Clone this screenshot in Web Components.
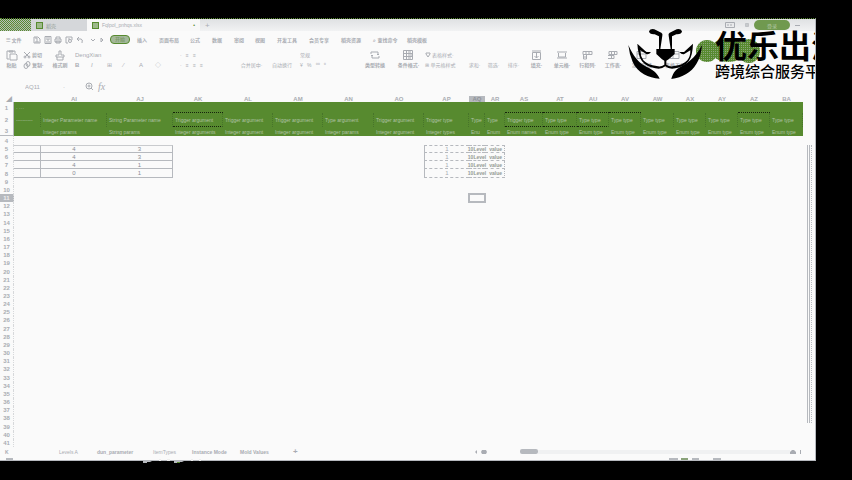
<!DOCTYPE html>
<html lang="zh-CN">
<head>
<meta charset="utf-8">
<title>Spreadsheet</title>
<style>
html, body { margin: 0; height: 100%; background: #000; }
body { font-family: "Liberation Sans", "Noto Sans CJK SC", sans-serif; --ink: #a9acb2; --green: #578a2f; --paper: #fafafa; color: var(--ink); }
</style>
</head>
<body>
<app-window></app-window>
<script>
const base = `:host,*{box-sizing:border-box}
button,input,select{all:unset;box-sizing:border-box;font:inherit;color:inherit;white-space:nowrap;cursor:default}
svg{display:block;fill:none;stroke:currentColor;stroke-width:1}`;
// Proportional column tracks from a list of start positions.
const tracks = (starts, total) => starts.map((s, i) =>
  `minmax(0,${(i + 1 < starts.length ? starts[i + 1] : total) - s}fr)`).join(' ');
class Base extends HTMLElement {
  paint(css, html) {
    this.attachShadow({ mode: 'open' }).innerHTML = `<style>${base}${css}</style>${html}`;
  }
}
const svg = (w, h, body) => `<svg width="${w}" height="${h}" viewBox="0 0 ${w} ${h}" aria-hidden="true">${body}</svg>`;
const icons = {
  save: svg(8, 8, '<path d="M1 1h4l2 2v4h-6zM3 1v2h2M3 7v-2h2v2"/>'),
  pdf: svg(8, 8, '<path d="M1 .5h6v7h-6zM3 1v3h2v-3M2 6h4"/>'),
  print: svg(8, 8, '<path d="M2 3v-2h4v2M1 3h6v3h-6zM2 5h4v2h-4z"/>'),
  find: svg(8, 8, '<path d="M1 1h6v3M1 1v6h2M3 3h2"/><circle cx="5" cy="5" r="1.5"/>'),
  undo: svg(8, 8, '<path d="M3 1L1 3l2 2M1 3h4q2 0 1 4"/>'),
  drop: svg(6, 8, '<path d="M1 3l2 2 2-2"/>'),
  play: svg(6, 8, '<path d="M2 2l2 2-2 2z"/>'),
  paste: svg(12, 11, '<path d="M3 9h-2v-8h8v2M4 4h6l1 1v5h-7z"/><path d="M3 1h4v1h-4z"/>'),
  cut: svg(8, 8, '<path d="M1 1l5 5M7 1l-5 5"/><circle cx="2" cy="6" r="1"/><circle cx="6" cy="6" r="1"/>'),
  copy: svg(8, 8, '<ellipse cx="3" cy="5" rx="2" ry="2.5"/><ellipse cx="5" cy="3" rx="2" ry="2.5"/>'),
  brush: svg(10, 11, '<path d="M4 1h2v4h3v2h-8v-2h3zM2 7v3h6v-3"/>'),
  cycle: svg(10, 10, '<path d="M1 4v-2h7v3M7 4l1 1 1-1M9 6v2h-7v-3M1 6l1-1 1 1"/>'),
  cond: svg(10, 10, '<path d="M.5 .5h9v9h-9zM0 3.500h10M0 6.500h10M3.500 0v10"/><path d="M5 2h3M5 5h4M5 8h3"/>'),
  tableicon: svg(6, 6, '<path d="M1 1h4v1l-2 3-2-3z"/>'),
  fill: svg(11, 10, '<path d="M1 1h9M1.500 2.500h8v7h-8zM5.500 3v5M3.500 6l2 2 2-2"/>'),
  cells: svg(10, 8, '<path d="M0 1h10M0 7h10M1.500 2v4h7v-4"/>'),
  rows: svg(11, 10, '<path d="M1 1.500h9v3h-9zM1.500 4v5h3v-5M4 1v3M7 1v3M1 7h3"/>'),
  sheet: svg(11, 10, '<path d="M2 1.500h8v3h-8zM1 5.500h6v3h-6M4.500 1v8M7.500 1v4"/>'),
  freeze: svg(11, 10, '<path d="M1 1.500h9v7h-9zM1 4h9M4 1v7"/>'),
  zoom: svg(9, 9, '<circle cx="4" cy="4" r="3"/><path d="M6 6l2 2M2.500 4h3M4 2.500v3"/>')
};

customElements.define('title-bar', class extends Base {
  connectedCallback() {
    this.paint(`:host{display:grid;grid-template-columns:${tracks([0,31,87,200,720,740,754,790,806],815)};align-items:center;height:12px;font-size:5px;
      background:linear-gradient(#dfe1e3,#f1f2f3)}
      button{display:flex;align-items:center;gap:3px;height:12px;padding:0 5px}
      .home{background:repeating-conic-gradient(#578a2f 0 25%,#b9c0b9 0 50%) 0 0/2px 2px;justify-content:center;color:#82a072}
      .doc{background:#d5d7da;color:#8f9a91}
      .active{background:#f8f8f8;justify-content:space-between}
      .mark{width:7px;height:7px;border:1px solid #578a2f;background:#9eb98b;display:inline-block}
      span{display:flex;align-items:center;gap:3px}
      b{color:#578a2f}
      .plus{font-size:8px}
      .user{height:10px;border-radius:5px;background:#70994f;justify-content:center;color:#b6c9a9}
      `, `<button class="home">首页</button>
      <button class="doc"><i class="mark"></i>稻壳</button>
      <button class="active"><span><i class="mark"></i>Fqlpol_pnhqs.xlsx</span><b>•</b></button>
      <button class="plus" aria-label="新建">+</button>
      <button aria-label="布局">${svg(10,8,'<path d="M.5 1.500h9v5h-9zM3 3v2M6 3v2"/>')}</button>
      <button aria-label="应用">${svg(7,8,'<path d="M.5 1.500h6v5h-6zM0 4h7M3.500 1v6"/>')}</button>
      <button class="user">登录</button>
      <button aria-label="最小化">${svg(5,8,'<path d="M0 4.500h5"/>')}</button><button aria-label="还原">${svg(6,8,'<path d="M.5 2.500h5v4h-5z"/>')}</button>`);
  }
});

customElements.define('menu-bar', class extends Base {
  connectedCallback() {
    const items = [[6,'☰ 文件'],[33,icons.save,'保存'],[44,icons.pdf,'输出'],[54,icons.print,'打印'],[65,icons.find,'预览'],[76,icons.undo,'撤销'],
      [90,icons.drop,'更多'],[99,icons.play,'展开'],[110,'开始'],[137,'插入'],[159,'页面布局'],[190,'公式'],[212,'数据'],[234,'审阅'],[255,'视图'],
      [277,'开发工具'],[309,'会员专享'],[341,'稻壳资源'],[373,'⌕ 查找命令'],[407,'稻壳模板']];
    this.paint(`:host{display:grid;grid-template-columns:6fr ${tracks(items.map(i => i[0]),815)};align-items:center;height:17px;font-size:5px;font-weight:700}
      button{justify-self:start}
      button:nth-of-type(9){border:1px solid #578a2f;border-radius:4px;background:#a3b899;color:#7e9a6c;padding:0 4px;line-height:7px}
      `, `<i></i>` + items.map(i => `<button${i[2] ? ` aria-label="${i[2]}"` : ''}>${i[1]}</button>`).join(''));
  }
});

customElements.define('ribbon-button', class extends Base {
  connectedCallback() {
    const icon = this.getAttribute('icon');
    this.paint(`:host{display:block;justify-self:center;font-size:5px}
      button{display:grid;grid-template-rows:12px 8px;align-items:center;justify-items:center;line-height:8px;font-weight:700}
      :host([faint]) button{font-weight:400}`,
      `<button><span>${icon ? icons[icon] : ''}</span><span><slot></slot></span></button>`);
  }
});

customElements.define('ribbon-bar', class extends Base {
  connectedCallback() {
    const rb = (icon, text, faint) => `<ribbon-button ${icon ? `icon="${icon}"` : ''} ${faint ? 'faint' : ''}>${text}</ribbon-button>`;
    this.paint(`:host{display:grid;grid-template-columns:${tracks([0,23,48,72,180,238,272,300,358,392,425,465,484,503,524,549,575,600,626,658,692],815)};
      align-items:start;height:29px;padding-top:1px;font-size:5px}
      .stack{display:grid;grid-template-rows:12px 8px;align-items:center;line-height:8px;font-weight:700}
      .stack button,.stack span{display:flex;align-items:center;gap:1px}
      .faint{font-weight:400}
      .font{grid-template-columns:minmax(0,1fr);padding-left:3px;font-weight:400;font-size:6px}
      .stack .row{display:flex;gap:10px}
      .row button{width:6px}`,
      `${rb('paste','粘贴')}
      <div class="stack"><button>${icons.cut}剪切</button><button>${icons.copy}复制·</button></div>
      ${rb('brush','格式刷')}
      <div class="stack font"><select aria-label="字体"><option>DengXian</option></select>
        <span class="row"><button><b>B</b></button><button><i>I</i></button><button>⊞</button><button>∕</button><button>A</button><button>◇</button></span></div>
      <div class="stack faint"><button>· &nbsp; ≡ &nbsp; ≡</button><button>· &nbsp; ≡ &nbsp; ≡ &nbsp; ≡</button></div>
      <div class="stack faint"><button>&nbsp;</button><button>&nbsp; 合并居中·</button></div>
      <div class="stack faint"><button>&nbsp;</button><button>自动换行</button></div>
      <div class="stack faint"><select aria-label="数字格式"><option>常规</option></select><button>¥ &nbsp; % &nbsp; ⁰⁰ &nbsp; ⁰</button></div>
      ${rb('cycle','类型转换')}${rb('cond','条件格式·')}
      <div class="stack faint"><button>${icons.tableicon} 表格样式·</button><button>⊞ 单元格样式</button></div>
      ${rb('','求和·',1)}${rb('','筛选·',1)}${rb('','排序·',1)}${rb('fill','填充·')}${rb('cells','单元格·')}${rb('rows','行和列·')}${rb('sheet','工作表·')}${rb('freeze','冻结窗格')}${rb('freeze','表格工具')}`);
  }
});

customElements.define('formula-bar', class extends Base {
  connectedCallback() {
    this.paint(`:host{display:grid;grid-template-columns:25fr 38fr 22fr 13fr 717fr;align-items:center;height:19px;font-size:6px}
      i{font:italic 10px "Liberation Serif",serif} button{justify-self:start}
      input{width:100%}`,
      `<span></span><input aria-label="名称框" value="AQ11"><button aria-label="名称">·</button>
      <button aria-label="查找">${icons.zoom}</button><label><i>fx</i></label>`);
  }
});

customElements.define('sheet-grid', class extends Base {
  connectedCallback() {
    const w = [14,27,66,66,50,50,50,51,50,45,16,20,38,34,32,32,33,32,32,32,33];
    const n = ['','','AI','AJ','AK','AL','AM','AN','AO','AP','AQ','AR','AS','AT','AU','AV','AW','AX','AY','AZ','BA'];
    const r2 = ['','----------','Integer Parameter name','String Parameter name','Trigger argument','Trigger argument','Trigger argument','Type argument','Trigger argument','Trigger type','Type','Type','Trigger type','Type type','Type type','Type type','Type type','Type type','Type type','Type type','Type type'];
    const r3 = ['','','Integer params','String params','Integer arguments','Integer argument','Integer argument','Integer params','Integer argument','Integer types','Enu','Enum','Enum names','Enum type','Enum type','Enum type','Enum type','Enum type','Enum type','Enum type','Enum type'];
    const vals = { 5: ['4','3'], 6: ['4','3'], 7: ['4','1'], 8: ['0','1'] };
    let rows = '';
    for (let r = 1; r <= 41; r++) {
      let cells = `<th scope="row">${r}</th>`;
      for (let c = 1; c < w.length; c++) {
        let t = '', k = '';
        if (r === 2) t = r2[c];
        if (r === 3) t = r3[c];
        if (r === 1) { if (c === 1) t = '· ···'; if ([4,12,13,14,15,19].includes(c)) k = 'dots'; }
        if (r === 2 && [4,12,13,14].includes(c)) k = 'dots';
        if (vals[r]) {
          if (c <= 3) { k = 'box'; if (c > 1) t = vals[r][c - 2]; }
          if (c >= 9 && c <= 11) { k = 'dash'; t = ['1','10Level','value'][c - 9]; if (c > 9) k += ' bold'; }
        }
        if (r === 11 && c === 10) k = 'sel';
        cells += `<td class="c${c} ${k}">${t}</td>`;
      }
      rows += `<tr class="r${r} ${r <= 3 ? 'band' : ''}">${cells}</tr>`;
    }
    this.paint(`:host{display:grid;grid-template-columns:minmax(0,803fr) minmax(0,12fr);grid-template-rows:minmax(0,1fr);min-height:0;font-size:6px}
      table{display:grid;grid-template-rows:6px 11px 14px 9px 9px repeat(37,minmax(0,1fr));min-height:0}
      thead,tbody{display:contents}
      tr{display:grid;grid-template-columns:${w.map(x => `minmax(0,${x}fr)`).join(' ')};grid-template-rows:minmax(0,1fr);min-height:0}
      th,td{padding:0;display:flex;align-items:center;justify-content:center;white-space:nowrap;min-width:0;min-height:0;line-height:6px;font-weight:400}
      th{font-weight:700}
      tbody th{border-right:1px dotted #d6d8da}
      thead th:first-child{justify-content:flex-end;padding-right:2px}
      thead th:nth-child(11){background:#b6b9be;color:#8f9399}
      .r11 th{background:#b6b9be;color:#eee}
      .band td{background:var(--green);color:#b1c2a6;font-size:5px;justify-content:flex-start;padding-left:2px;overflow:hidden}
      .band th{border-right:1px solid #b6b9be}
      .r3 th{border-bottom:1px solid #b6b9be}
      .band .dots{border-bottom:1px dotted #16230c}
      .r2 td{border-right:1px dotted #47742a}
      .box{border-bottom:1px solid #b6b9be;color:#898d93}
      .r5 .box{border-top:1px solid #c9cbce}
      .box.c1,.box.c3{border-right:1px solid #b6b9be}
      .dash{border-bottom:1px dashed #b6b9be}
      .r5 .dash{border-top:1px dashed #b6b9be}
      .dash.c9{border-left:1px solid #b6b9be}
      .dash.c11{border-right:1px dotted #b6b9be}
      .bold{font-weight:700;font-size:5px;color:#949b94}
      .dash.c11{justify-content:flex-end;padding-right:2px}
      .sel{border:2px solid #b6b9be;margin:-1px}
      .bar{display:flex;flex-direction:column;align-items:center;padding:7px 2px 24px}
      .bar i{flex:1;width:5px;margin-top:42px;border-left:1px solid #b6b9be;border-right:1px dotted #b6b9be;background:linear-gradient(90deg,#fafafa 1px,#b6b9be 1px 2px,#fafafa 2px)}`,
      `<table><thead><tr>${n.map((x, i) => `<th scope="col">${i ? x : '◢'}</th>`).join('')}</tr></thead><tbody>${rows}</tbody></table>
      <div class="bar"><i></i></div>`);
  }
});

customElements.define('sheet-tabs', class extends Base {
  connectedCallback() {
    this.paint(`:host{display:grid;grid-template-columns:${tracks([0,59,97,153,192,240,293,475,520,538,790],815)};align-items:center;height:9px;font-size:5px;line-height:8px;font-weight:700}
      button{justify-self:start}
      .first{padding-left:5px}
      .add{font-size:8px}
      .thumb{width:100%;height:5px;border-radius:2px;background:#b6b9be}
      .track{height:4px;background:#f0f1f2}
      .light{font-weight:400}`,
      `<button class="first" aria-label="第一个">K</button><button class="light">Levels A</button><button>dun_parameter</button><button class="light">ItemTypes</button>
      <button>Instance Mode</button><button>Mold Values</button><button class="add" aria-label="新建工作表">+</button>
      <button aria-label="左">${svg(14,6,'<path fill="currentColor" stroke="none" d="M2 1v4l-2-2zM7 1h4l1 2-1 2h-4l-1-2z"/>')}</button><button class="thumb" aria-label="水平滚动"></button><i class="track"></i><button aria-label="右">${svg(12,6,'<path fill="currentColor" stroke="none" d="M0 5v-2l2-2h2l2 2v2zM10 1h1v4h-1z"/>')}</button>`);
  }
});

customElements.define('status-strip', class extends Base {
  connectedCallback() {
    this.paint(`:host{display:grid;grid-template-columns:${tracks([0,6,13,669,678,681,688,692,699,713,721],815)};height:4px;align-items:end}
      i{height:2px} i:nth-of-type(even){background:#b6b9be} i:nth-of-type(6){background:#8aa27a}`, '<i></i>'.repeat(11));
  }
});

customElements.define('brand-overlay', class extends Base {
  connectedCallback() {
    this.paint(`:host{position:absolute;top:0;right:0;width:191px;height:70px;overflow:hidden;color:#000;pointer-events:none;
        display:grid;grid-template-columns:91px 1fr;font-family:"Noto Sans CJK SC",sans-serif}
      svg{fill:#000;stroke:none;margin-top:5px;overflow:visible}
      .words{white-space:nowrap;padding-top:8px}
      .words div:first-child{font-size:32px;line-height:34px;font-weight:700}
      .words div:last-child{font-size:15px;line-height:20px;font-weight:500}
      .words,svg.face{position:relative}
      svg.glow{position:absolute;left:70px;top:14px;margin:0}`,
      `<svg class="glow" width="70" height="34" viewBox="0 0 70 34">
        <defs><pattern id="d" width="2" height="2" patternUnits="userSpaceOnUse"><path fill="#578a2f" d="M0 0h2v2h-2z"/><path fill="#8ba77a" d="M1 0h1v1h-1z"/></pattern></defs>
        <g fill="url(#d)"><circle cx="13" cy="18" r="11"/><ellipse cx="34" cy="17" rx="17" ry="12"/><ellipse cx="55" cy="18" rx="11" ry="12"/></g></svg>
      <svg class="face" width="90" height="60" viewBox="0 0 270 180">
        <path d="M75 22Q79 13 91 16L112 26Q117 29 115 35L109 75H105V37L92 31Q76 32 75 22Z"/>
        <path d="M174 22Q170 13 158 16L137 26Q132 29 134 35L140 75H144V37L157 31Q173 32 174 22Z"/>
        <path d="M97 75H152V90L134 106L127 110V122Q138 130 150 126Q176 124 190 109Q200 96 199 79L181 90Q174 93 166 84L180 84L207 59Q206 95 194 112Q181 128 154 133Q136 137 124 127Q112 137 94 133Q67 128 54 112Q42 95 40 59L67 84L81 84Q74 93 67 90L49 79Q49 96 58 109Q72 124 98 126Q111 130 121 122V110L114 106L97 90Z"/>
        <path d="M13 63C28 96 43 116 67 128C86 137 99 145 107 164C73 162 42 148 26 114Q16 91 13 63Z"/>
        <path d="M234 63Q232 96 217 120C202 145 176 161 142 165C146 151 151 140 164 132C188 119 213 104 234 63Z"/>
      </svg>
      <div class="words"><div>优乐出海</div><div>跨境综合服务平台</div></div>`);
  }
});

customElements.define('caption-edge', class extends Base {
  connectedCallback() {
    this.paint(`:host{position:absolute;left:142px;bottom:-4px;width:70px;height:5px}svg{stroke:none}`,
      `<svg width="70" height="5" viewBox="0 0 70 5"><path fill="#b6b9be" d="M1 1h11l-4 2h-3v1h-4zM32 1h12l-4 2h-3l-1 1h-4z"/><path fill="#eee" d="M17 0h2v2h-2zM25 0h3v2h-3zM49 0h2v2h-2zM57 0h2v2h-2z"/><path fill="#578a2f" d="M35 3h3v1h-3z"/></svg>`);
  }
});

customElements.define('app-window', class extends Base {
  connectedCallback() {
    this.paint(`:host{display:flex;flex-direction:column;height:100vh;padding:18px 36px 19px 0}
      main{position:relative;flex:1;min-height:0;display:flex;flex-direction:column;background:var(--paper);border-top:1px dotted #578a2f;border-right:1px solid #b6b9be;border-bottom:1px solid #b6b9be;background-clip:padding-box}
      sheet-grid{flex:1}`,
      `<main><title-bar></title-bar><menu-bar></menu-bar><ribbon-bar></ribbon-bar><formula-bar></formula-bar><sheet-grid></sheet-grid><sheet-tabs></sheet-tabs><status-strip></status-strip><brand-overlay></brand-overlay><caption-edge></caption-edge></main>`);
  }
});
</script>
</body>
</html>
